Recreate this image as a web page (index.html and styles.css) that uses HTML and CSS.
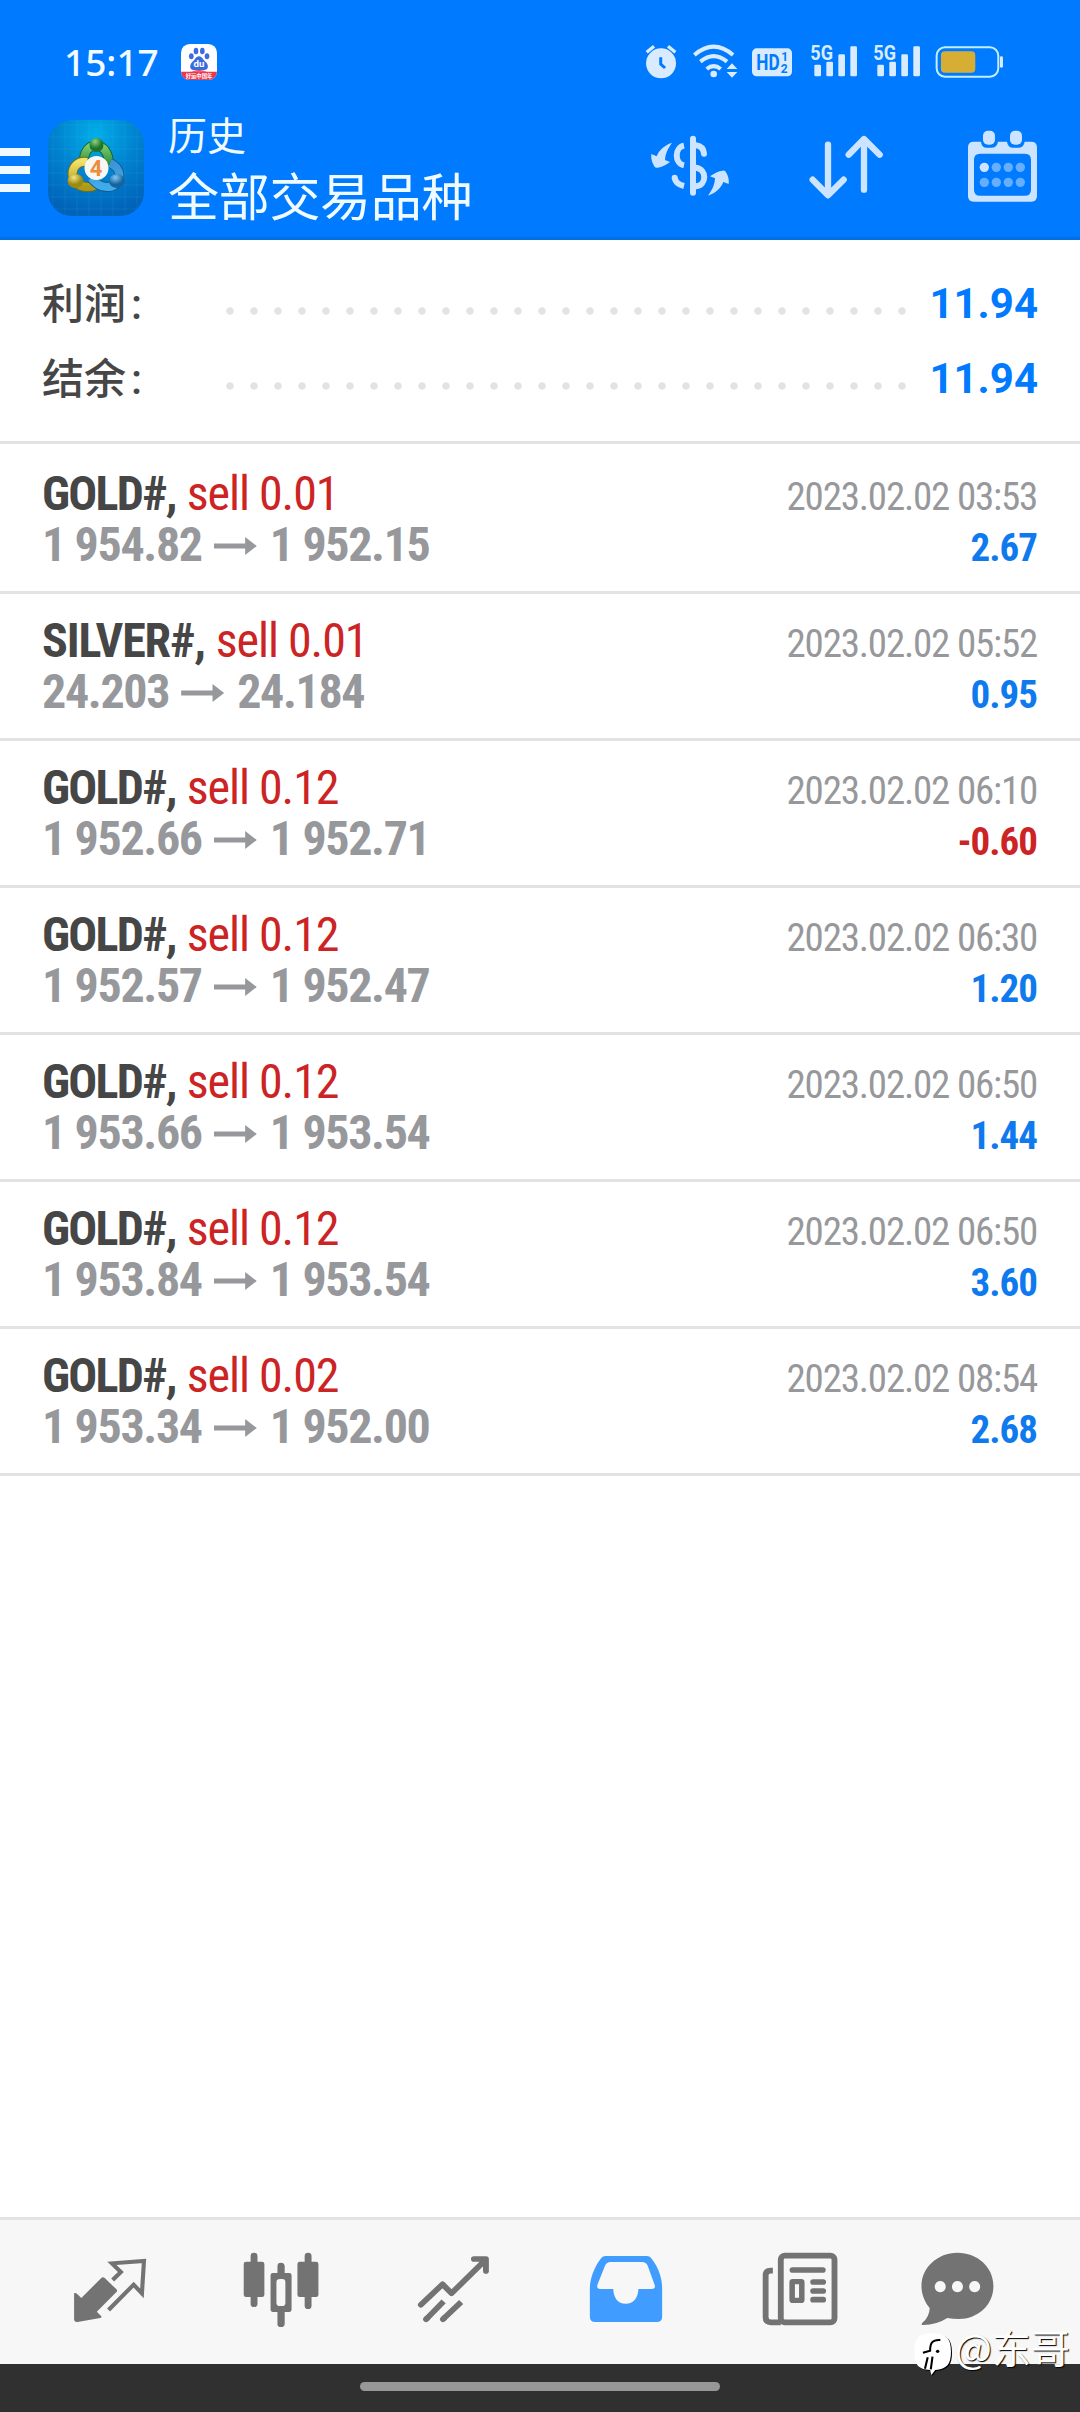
FILE: index.html
```html
<!DOCTYPE html>
<html lang="zh-CN">
<head>
<meta charset="utf-8">
<title>历史</title>
<link rel="stylesheet" href="styles.css">
</head>
<body>
<header class="header">
  <div class="status">
    <span class="clock">15:17</span>
    <svg class="baidu" viewBox="0 0 108 108">
      <defs><clipPath id="tile"><rect width="108" height="108" rx="26"/></clipPath></defs>
      <g clip-path="url(#tile)">
        <rect width="108" height="108" fill="#fff"/>
        <path d="M0 83H108V108H0Z" fill="#e8384f"/>
        <path d="M30 83Q54 73 78 83Z" fill="#e8384f"/>
        <g fill="#3b6be0"><ellipse cx="31" cy="37" rx="7" ry="9"/><ellipse cx="45" cy="21" rx="7" ry="10"/><ellipse cx="64" cy="21" rx="7" ry="10"/><ellipse cx="78" cy="37" rx="7" ry="9"/>
        <path d="M54 37C63 37 66 47 73 53C84 61 84 78 69 78H38C24 78 25 60 36 52C43 46 45 37 54 37Z"/></g>
        <text x="54" y="70" text-anchor="middle" class="paw-text">du</text>
        <text x="54" y="102" text-anchor="middle" class="ribbon-text">好运中国年</text>
      </g>
    </svg>
    <svg class="status-icons" viewBox="0 0 1090 110" fill="#d9ecff">
      <circle cx="63" cy="61" r="45"/>
      <path d="M20 28L42 10M84 10L106 28" stroke="#d9ecff" stroke-width="10"/>
      <path d="M62 43V63L75 75" fill="none" stroke="#007aff" stroke-width="9"/>
      <g fill="none" stroke="#d9ecff" stroke-width="12"><path d="M163 36Q221-14 279 36"/><path d="M181 56Q221 23 261 56"/><path d="M200 78Q221 61 242 78"/></g>
      <circle cx="221" cy="93" r="10"/><path d="M260 78L276 61L292 78ZM260 87L276 104L292 87Z"/>
      <rect x="336" y="16" width="120" height="84" rx="14"/>
      <text x="349" y="82" class="hd" textLength="70" lengthAdjust="spacingAndGlyphs">HD</text><text x="424" y="53" class="hd-small">1</text><text x="422" y="90" class="hd-small">2</text>
      <text x="511" y="50" class="net" textLength="68" lengthAdjust="spacingAndGlyphs">5G</text>
      <text x="700" y="50" class="net" textLength="68" lengthAdjust="spacingAndGlyphs">5G</text>
      <g id="bars"><rect x="523" y="65" width="20" height="35" rx="4"/><rect x="559" y="56" width="20" height="44" rx="4"/><rect x="595" y="34" width="20" height="66" rx="4"/><rect x="631" y="10" width="20" height="90" rx="4"/></g>
      <use href="#bars" x="189"/>
      <rect x="890" y="13" width="185" height="88" rx="25" fill="none" stroke="#c2efff" stroke-width="6"/>
      <rect x="903" y="25" width="103" height="64" rx="12" fill="#d7ae34"/><rect x="1080" y="40" width="9" height="34" rx="4"/>
    </svg>
  </div>
  <div class="toolbar">
    <div class="menu"><i></i><i></i><i></i></div>
    <svg class="logo" viewBox="0 0 96 96">
      <defs>
        <radialGradient id="sky" cx=".5" cy=".15" r=".85"><stop offset="0" stop-color="#00aee8"/><stop offset=".5" stop-color="#0082cf"/><stop offset="1" stop-color="#0062b8"/></radialGradient>
        <linearGradient id="gr" x2="0" y2="1"><stop stop-color="#7ccb70"/><stop offset="1" stop-color="#278a35"/></linearGradient>
        <linearGradient id="ye" x2="0" y2="1"><stop stop-color="#f0e26a"/><stop offset="1" stop-color="#ab9a18"/></linearGradient>
        <linearGradient id="bl" x2="0" y2="1"><stop stop-color="#3c95d5"/><stop offset="1" stop-color="#3facec"/></linearGradient>
        <radialGradient id="hg" cx=".4" cy=".25"><stop stop-color="#8bd483"/><stop offset="1" stop-color="#1e7429"/></radialGradient>
        <radialGradient id="hy" cx=".4" cy=".25"><stop stop-color="#f3e785"/><stop offset="1" stop-color="#9a8912"/></radialGradient>
        <radialGradient id="hb" cx=".4" cy=".25"><stop stop-color="#83c9f4"/><stop offset="1" stop-color="#14649f"/></radialGradient>
        <pattern id="grid" width="12" height="12" patternUnits="userSpaceOnUse"><path d="M5 0V12M0 5H12" stroke="#5dccff" stroke-opacity=".1"/></pattern>
      </defs>
      <rect width="96" height="96" rx="24" fill="url(#sky)"/><rect width="96" height="96" rx="24" fill="url(#grid)"/>
      <g fill="none" stroke-width="8">
        <path d="M36 44C34 19 62 19 61 46" stroke="#176b2b" stroke-width="10"/><path d="M36 44C34 19 62 19 61 46" stroke="url(#gr)"/>
        <path d="M39 42C21 39 18 67 40 67C46 67 49 64 50 61" stroke="#786b13" stroke-width="10"/><path d="M39 42C21 39 18 67 40 67C46 67 49 64 50 61" stroke="url(#ye)"/>
        <path d="M62 43C76 49 74 67 59 67C51 67 47 62 43 58" stroke="#145b91" stroke-width="10"/><path d="M62 43C76 49 74 67 59 67C51 67 47 62 43 58" stroke="url(#bl)"/>
      </g>
      <circle cx="48.500" cy="25" r="7" fill="url(#hg)"/><ellipse cx="27.500" cy="61" rx="8" ry="7" fill="url(#hy)"/><ellipse cx="69" cy="61" rx="8" ry="7" fill="url(#hb)"/>
      <circle cx="48.500" cy="48" r="12" fill="#f7f7f3"/><text x="48" y="55.500" text-anchor="middle" class="four">4</text>
    </svg>
    <div class="titles"><div class="title">历史</div><div class="subtitle">全部交易品种</div></div>
    <svg class="actions" viewBox="60 310 1200 250" fill="#cce4ff">
      <g fill="none" stroke="#cce4ff" stroke-linecap="round">
        <path d="M219 357V519" stroke-width="18"/>
        <path d="M192 378C164 383 162 431 192 437M164 474Q167 493 192 499" stroke-width="18" stroke-linecap="butt"/>
        <path d="M228 377Q250 380 252 402M228 444C261 448 261 497 228 500" stroke-width="18"/>
        <path d="M624 375V522M578 480L624 527L671 480M732 510V360M686 405L732 358L779 405" stroke-width="19" stroke-linejoin="round"/>
      </g>
      <circle cx="164" cy="474" r="9"/>
      <path d="M156 369C132 377 117 392 110 410L94 403C92 417 97 431 104 442Q107 445 113 444Q132 441 150 427L135 421C136 401 145 384 156 369Z"/>
      <path d="M264 528C288 520 303 505 310 487L326 493C328 480 324 466 317 456Q314 452 308 453Q290 455 270 470L285 476C284 496 276 512 264 528Z"/>
      <path fill-rule="evenodd" d="M1061 366H1083Q1084 384 1101 384H1113Q1132 384 1134 366H1161Q1163 384 1180 384H1194Q1212 384 1214 366H1234Q1251 366 1251 383V529Q1251 546 1234 546H1061Q1044 546 1044 529V383Q1044 366 1061 366ZM1080 402Q1062 402 1062 420V510Q1062 528 1080 528H1215Q1233 528 1233 510V420Q1233 402 1215 402Z"/>
      <rect x="1089" y="333" width="36" height="42" rx="15"/><rect x="1170" y="333" width="36" height="42" rx="15"/>
      <circle cx="1093" cy="443" r="14"/><g fill="#66afff"><circle cx="1129" cy="443" r="14"/><circle cx="1165" cy="443" r="14"/><circle cx="1201" cy="443" r="14"/><circle cx="1093" cy="488" r="14"/><circle cx="1129" cy="488" r="14"/><circle cx="1165" cy="488" r="14"/><circle cx="1201" cy="488" r="14"/></g>
    </svg>
  </div>
</header>
<main>
  <section class="summary">
    <div class="sum-row"><span class="label">利润<b>:</b></span><span class="dots"></span><span class="total">11.94</span></div>
    <div class="sum-row"><span class="label">结余<b>:</b></span><span class="dots"></span><span class="total">11.94</span></div>
  </section>
  <section class="deals">
    <article class="deal"><div><p class="name"><b>GOLD#,</b> <span>sell 0.01</span></p><p class="price">1 954.82<i class="arrow"></i>1 952.15</p></div><div class="right"><p class="date">2023.02.02 03:53</p><p class="profit">2.67</p></div></article>
    <article class="deal"><div><p class="name"><b class="long">SILVER#,</b> <span>sell 0.01</span></p><p class="price">24.203<i class="arrow"></i>24.184</p></div><div class="right"><p class="date">2023.02.02 05:52</p><p class="profit">0.95</p></div></article>
    <article class="deal"><div><p class="name"><b>GOLD#,</b> <span>sell 0.12</span></p><p class="price">1 952.66<i class="arrow"></i>1 952.71</p></div><div class="right"><p class="date">2023.02.02 06:10</p><p class="profit loss">-0.60</p></div></article>
    <article class="deal"><div><p class="name"><b>GOLD#,</b> <span>sell 0.12</span></p><p class="price">1 952.57<i class="arrow"></i>1 952.47</p></div><div class="right"><p class="date">2023.02.02 06:30</p><p class="profit">1.20</p></div></article>
    <article class="deal"><div><p class="name"><b>GOLD#,</b> <span>sell 0.12</span></p><p class="price">1 953.66<i class="arrow"></i>1 953.54</p></div><div class="right"><p class="date">2023.02.02 06:50</p><p class="profit">1.44</p></div></article>
    <article class="deal"><div><p class="name"><b>GOLD#,</b> <span>sell 0.12</span></p><p class="price">1 953.84<i class="arrow"></i>1 953.54</p></div><div class="right"><p class="date">2023.02.02 06:50</p><p class="profit">3.60</p></div></article>
    <article class="deal"><div><p class="name"><b>GOLD#,</b> <span>sell 0.02</span></p><p class="price">1 953.34<i class="arrow"></i>1 952.00</p></div><div class="right"><p class="date">2023.02.02 08:54</p><p class="profit">2.68</p></div></article>
  </section>
</main>
<nav class="tabs">
  <svg viewBox="200.200 156 240 240" preserveAspectRatio="none"><path d="M215 280Q219 277 223 281L236 294L294 234Q299 229 304 234L338 268Q342 272 338 276L281 335L294 349Q296 353 291 354L225 366Q215 367 215 357Z"/><path d="M327 240L351 216L325 190L418 183L412 280L388 254L315 330" fill="none" stroke="#737373" stroke-width="12"/></svg>
  <svg viewBox="701.100 156 240 240" preserveAspectRatio="none"><rect x="709" y="185" width="60" height="106" rx="7"/><rect x="729" y="158" width="20" height="163" rx="10"/><rect x="865" y="185" width="61" height="106" rx="7"/><rect x="886" y="158" width="20" height="169" rx="10"/><path fill-rule="evenodd" d="M807 219V198Q807 188 817 188T828 198V219H841Q848 219 848 226V328Q848 336 841 336H828V371Q828 381 817 381T807 371V336H794Q787 336 787 328V226Q787 219 794 219ZM814 237Q804 237 804 247V308Q804 318 814 318H821Q830 318 830 308V247Q830 237 821 237Z"/></svg>
  <svg viewBox="1202 156 240 240" preserveAspectRatio="none" fill="none" stroke="#737373" stroke-width="17" stroke-linejoin="round" stroke-linecap="round"><path d="M1222 314L1285 253L1311 280L1410 179M1376 177H1411V213"/><path d="M1237 358L1288 304M1286 358L1339 306" stroke-linecap="butt"/><path d="M1237 358L1240 355M1286 358L1289 355"/></svg>
  <svg viewBox="134.800 156 240 240" preserveAspectRatio="none" fill="#409cff"><path fill-rule="evenodd" d="M192 168H311Q321 168 326 177C347 205 356 237 356 265V350Q356 366 340 366H162Q146 366 146 350V265C146 237 158 203 177 177Q182 168 192 168ZM206 186Q195 186 190 197L168 254Q165 267 176 267H214C215 294 227 311 250 311S286 294 287 267H326Q338 267 334 254L314 197Q309 186 298 186Z"/></svg>
  <svg viewBox="635.700 156 240 240" preserveAspectRatio="none" fill="none" stroke="#737373" stroke-width="17"><rect x="699" y="167" width="156" height="200" rx="12"/><path d="M676 212H669Q655 212 655 226V352Q655 367 670 367H699"/><path d="M733 210H821M793 246H822M793 273H822M793 299H822" stroke-linecap="round"/><rect x="732" y="245" width="28" height="56" rx="2" stroke-width="16"/></svg>
  <svg viewBox="1136.700 156 240 240" preserveAspectRatio="none"><path fill-rule="evenodd" d="M1213 158C1272 158 1318 201 1318 258C1318 318 1270 357 1218 357Q1200 357 1184 354Q1155 374 1113 375Q1107 375 1111 369Q1132 352 1133 324C1118 306 1109 283 1109 258C1109 202 1157 158 1213 158ZM1163 243A16 17 0 1 0 1164 243ZM1213 243A16 17 0 1 0 1214 243ZM1263 243A16 17 0 1 0 1264 243Z"/></svg>
</nav>
<footer class="system"><div class="handle"></div></footer>
<div class="watermark">
  <svg viewBox="1083 396 114 132" preserveAspectRatio="none"><path d="M1140 400C1180 400 1194 415 1194 455C1194 492 1182 507 1148 510L1137 525L1133 510C1098 507 1087 494 1087 455C1087 413 1100 400 1140 400Z" fill="#000" transform="translate(3 3)"/><path d="M1140 400C1180 400 1194 415 1194 455C1194 492 1182 507 1148 510L1137 525L1133 510C1098 507 1087 494 1087 455C1087 413 1100 400 1140 400Z" fill="#fff"/><path d="M1163 420C1140 418 1133 429 1133 452L1112 458M1126 472L1118 506M1140 470L1135 508" fill="none" stroke="#000" stroke-width="6"/><circle cx="1155" cy="454" r="5"/></svg>
  <span>@东哥</span>
</div>
</body>
</html>
```
FILE: styles.css
```css
* { box-sizing: border-box; }
body { margin: 0; width: 1080px; height: 2412px; display: flex; flex-direction: column; background: #fff; font-family: Roboto, "Noto Sans CJK SC", sans-serif; overflow: hidden; }
p { margin: 0; }
.header { height: 240px; background: #007aff; border-bottom: 3px solid #0070e4; }
.status { display: flex; height: 100px; padding: 44px 77px 0 64px; }
.clock { width: 117px; margin-top: -1px; font: 500 37px/38px "Noto Sans", sans-serif; color: #f2fbff; }
.baidu { width: 36px; height: 36px; }
.paw-text { font: bold 29px Roboto, sans-serif; fill: #fff; }
.ribbon-text { font: bold 16px "Noto Sans CJK SC", sans-serif; fill: #fff; }
.status-icons { width: 363.330px; height: 36.670px; margin: -1px 0 0 auto; overflow: visible; }
.hd { font: bold 68px Roboto, sans-serif; fill: #007aff; }
.hd-small { font: bold 36px Roboto, sans-serif; fill: #007aff; }
.net { font: bold 62px Roboto, sans-serif; }
.toolbar { display: flex; height: 137px; }
.menu { display: flex; flex-direction: column; gap: 10px; width: 30px; padding-top: 48px; }
.menu i { height: 8px; background: #f0f9ff; }
.logo { width: 96px; height: 96px; margin: 20px 0 0 18px; }
.four { font: bold 22px Roboto, sans-serif; fill: #ee8c3c; }
.titles { margin-left: 24px; color: #f0fbff; font-family: "Noto Sans CJK SC", sans-serif; }
.title { margin-top: 12px; font-size: 39px; line-height: 42px; }
.subtitle { margin-top: 10px; font-size: 51px; line-height: 60px; letter-spacing: -.3px; white-space: nowrap; }
.actions { width: 400px; height: 83.330px; margin: 23px 40px 0 auto; }
.summary { height: 204px; padding: 26px 42px 0; border-bottom: 3px solid #e3e3e3; }
.sum-row { display: flex; height: 75px; align-items: center; }
.label { width: 176px; margin-top: -7px; font: 500 42px/75px "Noto Sans CJK SC", sans-serif; color: #464646; }
.label b { margin-left: 5px; font: 500 42px Roboto, sans-serif; }
.dots { width: 696px; height: 8px; margin-top: 14px; background: radial-gradient(circle at 12px 4px, #e3e3e3 3.400px, transparent 4px) 0 0 / 24px 8px; }
.total { margin-left: auto; font: 700 42px/75px Roboto, sans-serif; color: #007aff; }
.deals { padding-top: 3px; }
.deal { display: flex; justify-content: space-between; height: 147px; padding: 21px 42px 0; border-bottom: 3px solid #e3e3e3; font-family: "Roboto Condensed", Roboto, sans-serif; font-stretch: 75%; white-space: nowrap; }
.name, .price { font-size: 48px; line-height: 51px; }
.name b { color: #464646; letter-spacing: -1.750px; }
.name b.long { letter-spacing: -1.150px; }
.name span { color: #cc2424; letter-spacing: -1.050px; }
.price { font-weight: 700; color: #97989b; letter-spacing: -1.350px; }
.arrow { display: inline-block; width: 43px; height: 18px; margin: 0 13px 0 12px; vertical-align: 6px; background: #97989b; clip-path: polygon(0 36%, 73% 36%, 73% 0, 100% 50%, 73% 100%, 73% 64%, 0 64%); }
.right { text-align: right; font-size: 39px; line-height: 51px; margin-top: 1px; }
.date { color: #97989b; padding-top: 3px; margin-right: 1px; letter-spacing: -1.200px; }
.profit { font-weight: 700; color: #0f7aee; margin-right: 1px; letter-spacing: -1px; }
.profit.loss { color: #cc2424; }
.tabs { display: grid; grid-template-columns: repeat(6, 172.500px); align-items: center; justify-items: center; height: 147px; margin-top: auto; padding-left: 24px; background: #f7f7f7; border-top: 3px solid #e3e3e3; }
.tabs svg { width: 82.640px; height: 80px; overflow: visible; }
.tabs svg:not([fill]) { fill: #737373; }
.system { height: 48px; padding-top: 18px; background: #303030; }
.handle { width: 360px; height: 9px; margin: 0 auto; border-radius: 5px; background: #979797; }
.watermark { position: absolute; left: 913px; top: 2332px; display: flex; align-items: flex-start; }
.watermark svg { width: 39px; height: 44px; }
.watermark span { margin: -5px 0 0 3px; font: 400 39px/38px "Noto Sans CJK SC", sans-serif; color: #fff; text-shadow: 1px 1px 1px #000; white-space: nowrap; }
```
